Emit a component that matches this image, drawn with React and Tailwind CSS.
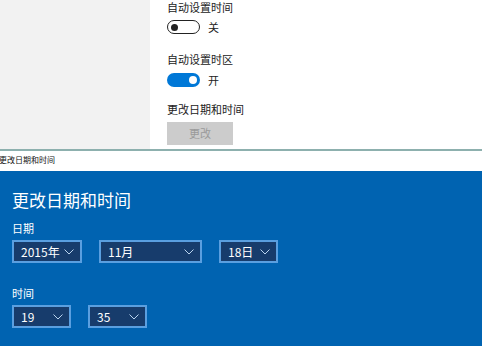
import React from "react";

const F = { fontFamily: '"Noto Sans CJK SC", "Liberation Sans", sans-serif' };

function Chevron() {
  return (
    <svg width="10" height="6" viewBox="0 0 10 6" className="shrink-0">
      <path d="M0.5 0.5 L5 5 L9.5 0.5" fill="none" stroke="#b9d3ee" strokeWidth="1" />
    </svg>
  );
}

function Select({ text, w }) {
  return (
    <div
      className={`flex items-center justify-between h-[23px] border-2 border-[#5a9fe0] bg-[#173c6c] pl-[7px] pr-[6px] text-white text-[12px] ${w}`}
    >
      <span className="leading-none">{text}</span>
      <Chevron />
    </div>
  );
}

export default function App() {
  return (
    <div className="w-[482px] h-[346px] overflow-hidden flex flex-col bg-white" style={F}>
      <div className="h-[149px] flex shrink-0">
        <div className="w-[150px] bg-[#f2f2f2]" />
        <div className="flex-1 bg-white pl-[17px] flex flex-col text-[11px] text-[#222]">
          <div className="h-[15px] leading-[15px]">自动设置时间</div>
          <div className="flex items-center mt-[5px] h-[14px]">
            <div className="w-[33px] h-[14px] rounded-full border-[1.5px] border-[#222] flex items-center pl-[3px]">
              <div className="w-[7px] h-[7px] rounded-full bg-[#222]" />
            </div>
            <span className="ml-[8px]">关</span>
          </div>
          <div className="h-[15px] leading-[15px] mt-[18px]">自动设置时区</div>
          <div className="flex items-center mt-[6px] h-[14px]">
            <div className="w-[33px] h-[14px] rounded-full bg-[#0078d7] flex items-center justify-end pr-[3px]">
              <div className="w-[8px] h-[8px] rounded-full bg-white" />
            </div>
            <span className="ml-[8px]">开</span>
          </div>
          <div className="h-[15px] leading-[15px] mt-[15px]">更改日期和时间</div>
          <div className="mt-[5px] w-[66px] h-[23px] bg-[#cccccc] text-[#9a9a9a] flex items-center justify-center text-[11px]">
            更改
          </div>
        </div>
      </div>
      <div className="h-[2px] bg-[#8db0ae] shrink-0" />
      <div className="h-[20px] bg-white shrink-0 text-[8px] text-[#111] leading-[18px] -ml-[1px]">更改日期和时间</div>
      <div className="flex-1 bg-[#0063b1] pl-[12px] text-white">
        <div className="text-[17px] leading-[22px] mt-[18px]">更改日期和时间</div>
        <div className="text-[11px] leading-[13px] mt-[11px]">日期</div>
        <div className="flex mt-[5px]">
          <Select text="2015年" w="w-[70px]" />
          <Select text="11月" w="w-[103px] ml-[17px]" />
          <Select text="18日" w="w-[59px] ml-[17px]" />
        </div>
        <div className="text-[11px] leading-[13px] mt-[24px]">时间</div>
        <div className="flex mt-[5px]">
          <Select text="19" w="w-[59px]" />
          <Select text="35" w="w-[59px] ml-[17px]" />
        </div>
      </div>
    </div>
  );
}
